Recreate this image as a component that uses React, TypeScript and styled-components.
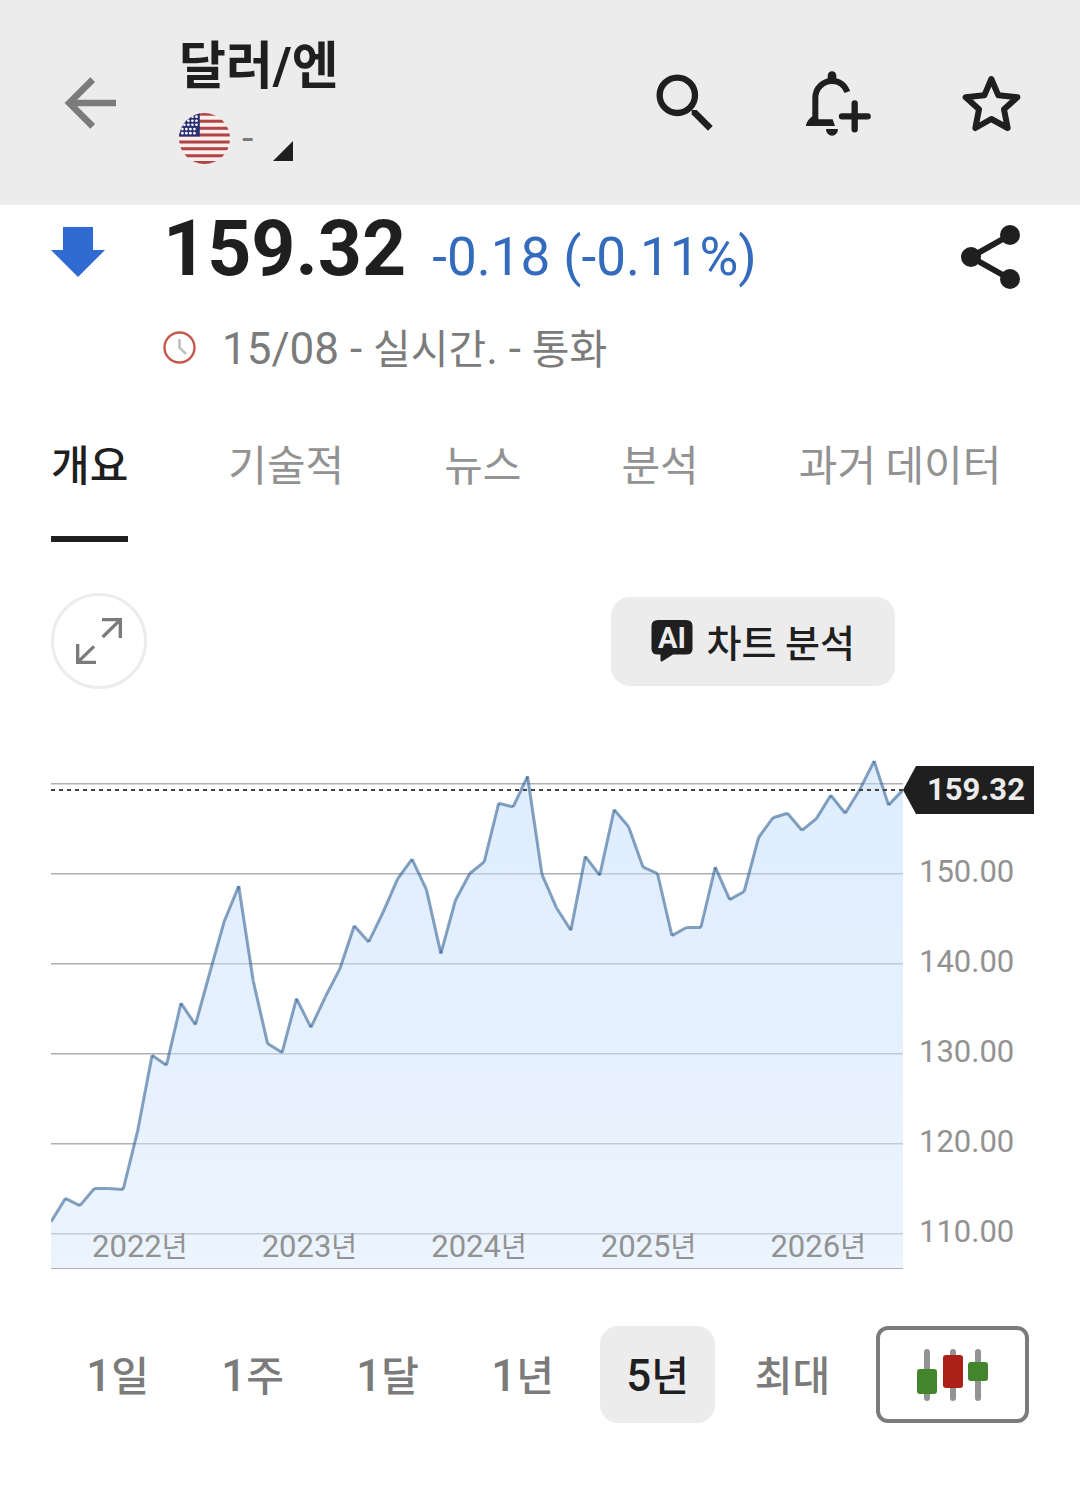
import React from 'react';
import styled, { createGlobalStyle } from 'styled-components';

const ink = '#1f1f1f';
const gray = '#7b7b7b';
const lightGray = '#929292';
const surface = '#ececec';
const blue = '#346bbd';

const GlobalStyle = createGlobalStyle`
  * { box-sizing: border-box; }
  body {
    margin: 0;
    background: #fff;
    color: ${ink};
    font-family: Roboto, "Noto Sans CJK KR", sans-serif;
  }
  h1, p, ul, ol { margin: 0; padding: 0; }
  ul, ol { list-style: none; }
  button {
    border: 0;
    padding: 0;
    background: none;
    color: inherit;
    font: inherit;
    cursor: pointer;
  }
  svg { display: block; }
`;

const Hangul = styled.span<{ $size: number }>`
  font-family: "Noto Sans CJK KR", sans-serif;
  font-size: ${(p) => p.$size}px;
`;

const Header = styled.header`
  display: flex;
  align-items: center;
  height: 205px;
  padding: 0 53px 0 64px;
  background: ${surface};
`;

const IconButton = styled.button`
  flex: none;
  display: block;
`;

const Heading = styled.div`
  flex: 1;
  display: flex;
  flex-direction: column;
  gap: 16px;
  padding: 0 0 4px 63px;
`;

const Title = styled.h1`
  font: 700 51px/60px Roboto, "Noto Sans CJK KR", sans-serif;
`;

const MarketButton = styled.button`
  display: flex;
  align-items: flex-end;
  align-self: flex-start;
  height: 51px;
`;

const MarketName = styled.span`
  width: 43px;
  padding-left: 12px;
  text-align: left;
  color: ${gray};
  font-size: 41px;
  line-height: 51px;
`;

const Corner = styled.span`
  width: 20px;
  height: 20px;
  margin-bottom: 3px;
  background: ${ink};
  clip-path: polygon(100% 0, 100% 100%, 0 100%);
`;

const Actions = styled.div`
  display: flex;
  gap: 81px;
`;

const Quote = styled.section`
  display: grid;
  grid-template-columns: 112px 1fr auto;
  padding: 0 59px 0 51px;
`;

const Arrow = styled.div`
  padding-top: 22px;
`;

const Prices = styled.div`
  display: flex;
  align-items: baseline;
  gap: 26px;
  line-height: 88px;
`;

const Price = styled.strong`
  font-size: 77px;
  font-weight: 700;
`;

const Change = styled.span`
  font-size: 53px;
  color: ${blue};
`;

const Share = styled(IconButton)`
  align-self: start;
  margin-top: 18px;
`;

const Meta = styled.p`
  grid-column: 2 / 4;
  display: flex;
  align-items: center;
  gap: 26px;
  margin-top: 15px;
  color: ${gray};
  font-size: 44px;
  line-height: 60px;
`;

const Tabs = styled.nav`
  display: flex;
  gap: 100px;
  padding: 52px 51px 0;
  overflow: hidden;
`;

const Tab = styled.a<{ $active?: boolean }>`
  flex: none;
  height: 111px;
  border-bottom: 6px solid ${(p) => (p.$active ? ink : 'transparent')};
  color: ${(p) => (p.$active ? ink : lightGray)};
  font: ${(p) => (p.$active ? 500 : 400)} 42px/64px "Noto Sans CJK KR", sans-serif;
  text-decoration: none;
`;

const Tools = styled.div`
  display: flex;
  align-items: center;
  justify-content: space-between;
  padding: 51px 185px 0 51px;
`;

const Expand = styled.button`
  display: grid;
  place-items: center;
  width: 96px;
  height: 96px;
  border: 3px solid ${surface};
  border-radius: 50%;
`;

const Analyze = styled.button`
  display: flex;
  align-items: center;
  gap: 14px;
  height: 89px;
  padding: 0 40px;
  border-radius: 19px;
  background: ${surface};
  font: 500 38px/56px "Noto Sans CJK KR", sans-serif;
`;

const ChartArea = styled.section`
  display: grid;
  grid-template-columns: 1fr 131px;
  align-items: start;
  padding: 66px 46px 0 51px;
`;

const Plot = styled.div`
  position: relative;
`;

const PlotSvg = styled.svg`
  width: 100%;
  height: 514px;
`;

const Years = styled.ol`
  position: absolute;
  inset: auto 0 0 0;
  display: flex;
  padding-left: 4px;
  color: ${lightGray};
  font-size: 31px;
  line-height: 44px;
  text-align: center;

  li { width: 20%; }
`;

const Axis = styled.div`
  padding-top: 11px;
`;

const PriceTag = styled.div`
  height: 48px;
  padding-left: 24px;
  background: ${ink};
  clip-path: polygon(13px 0, 100% 0, 100% 100%, 13px 100%, 0 50%);
  color: ${surface};
  font-size: 31px;
  font-weight: 700;
  line-height: 48px;
`;

const Ticks = styled.ol`
  padding: 13px 0 0 16px;
  color: ${lightGray};
  font-size: 31px;
  line-height: 90px;
`;

const Footer = styled.section`
  display: flex;
  gap: 26px;
  padding: 49px 51px 0 60px;
`;

const Ranges = styled.div`
  flex: 1;
  display: grid;
  grid-template-columns: repeat(6, 1fr);
  gap: 20px;
`;

const Range = styled.button<{ $active?: boolean }>`
  height: 97px;
  border-radius: 18px;
  background: ${(p) => (p.$active ? surface : 'transparent')};
  color: ${(p) => (p.$active ? ink : gray)};
  font-size: 44px;
  font-weight: 500;
  line-height: 60px;
  white-space: nowrap;
`;

const ChartType = styled.button`
  display: grid;
  place-items: center;
  width: 153px;
  height: 97px;
  border: 4px solid ${gray};
  border-radius: 12px;
`;

const history = [
  111.3, 113.9, 113.1, 115, 115, 114.9, 121.4, 129.8, 128.7, 135.6, 133.2, 139,
  144.7, 148.6, 138.1, 131.1, 130.1, 136.1, 132.9, 136.3, 139.4, 144.2, 142.4, 145.7,
  149.4, 151.6, 148.2, 141.1, 147, 150, 151.3, 157.8, 157.4, 160.8, 149.9, 146.2,
  143.7, 151.9, 149.8, 157.1, 155.2, 150.7, 150, 143.1, 144, 144, 150.7, 147.1,
  148, 154, 156.2, 156.7, 154.8, 156.1, 158.7, 156.7, 159.3, 162.5, 157.6, 159.3,
];

const W = 852;
const H = 514;
const yOf = (v: number) => 28.5 + (160 - v) * 9;
const points = history.map((v, i) => [(i * W) / (history.length - 1), yOf(v)]);
const areaPath = `M0 ${H} ${points.map(([x, y]) => `L${x} ${y}`).join(' ')} L${W} ${H}Z`;

const PriceChart = () => (
  <PlotSvg viewBox={`0 0 ${W} ${H}`} preserveAspectRatio="none" role="img" aria-label="달러/엔 5년">
    <defs>
      <linearGradient id="area" x1="0" y1="0" x2="0" y2="1">
        <stop offset="0" stopColor="#bedafc" />
        <stop offset="1" stopColor="#d9eafd" />
      </linearGradient>
    </defs>
    {[160, 150, 140, 130, 120, 110].map((v) => (
      <line key={v} x1="0" x2={W} y1={yOf(v) + 0.2} y2={yOf(v) + 0.2} stroke="#b0b0b0" strokeWidth="1.4" />
    ))}
    <path d={areaPath} fill="url(#area)" fillOpacity="0.5" />
    <g stroke="#285a8c" strokeOpacity="0.56" strokeWidth="3">
      {points.slice(1).map(([x, y], i) => (
        <line key={i} x1={points[i][0]} y1={points[i][1]} x2={x} y2={y} />
      ))}
    </g>
    <line x1="0" x2={W} y1="35" y2="35" stroke="#444" strokeWidth="2" strokeDasharray="4 4" />
    <line x1="0" x2={W} y1="513.5" y2="513.5" stroke="#b0b0b0" />
  </PlotSvg>
);

const BackIcon = () => (
  <svg width="52" height="52" viewBox="72 172 156 156" fill="none" stroke={gray} strokeWidth="20">
    <path d="M228 250H92M158 180L88 250L158 320" />
  </svg>
);

const FlagIcon = () => (
  <svg width="51" height="51" viewBox="418 279 152 152">
    <defs>
      <clipPath id="flag"><circle cx="494" cy="355" r="76" /></clipPath>
    </defs>
    <g clipPath="url(#flag)">
      <rect x="418" y="279" width="152" height="152" fill="#fdeeee" />
      {[283, 304, 325, 345, 366, 386, 407, 427].map((y) => (
        <rect key={y} x="418" y={y - 5} width="152" height="9" fill="#ad4545" />
      ))}
      <rect x="418" y="279" width="62" height="70" fill="#2b2f73" />
      {[[458, 290], [470, 290], [446, 302], [458, 302], [470, 302], [434, 314], [446, 314], [458, 314], [470, 314], [428, 327], [440, 327], [452, 327], [464, 327], [428, 339], [440, 339], [452, 339], [464, 339]].map(([x, y]) => (
        <circle key={`${x}-${y}`} cx={x} cy={y} r="4" fill="#fff" />
      ))}
    </g>
  </svg>
);

const SearchIcon = () => (
  <svg width="72" height="72" viewBox="57 51 216 216" fill="none" stroke={ink}>
    <circle cx="142" cy="136" r="53" strokeWidth="19" />
    <path d="M185 180H200L248 228L234 242L185 193Z" fill={ink} stroke="none" />
  </svg>
);

const BellPlusIcon = () => (
  <svg width="72" height="72" viewBox="516 51 216 216" fill="none" stroke={ink}>
    <path d="M556 214V143A50 50 0 0 1 606 93C628 93 644 106 652 126" strokeWidth="18" />
    <path d="M593 92V77A13 13 0 0 1 619 77V92Z" fill={ink} stroke="none" />
    <path d="M528 228C529 215 537 207 548 198L565 208H608L615 228Z" fill={ink} stroke="none" />
    <path d="M588 237H624A18 20 0 0 1 588 237Z" fill={ink} stroke="none" />
    <path d="M636 199H713M674 160V238" strokeWidth="19" strokeLinecap="round" />
  </svg>
);

const StarIcon = () => (
  <svg width="72" height="72" viewBox="975 51 216 216" fill="none" stroke={ink}>
    <path d="M1084 87L1105 136L1162 142L1122 178L1133 234L1084 207L1036 234L1047 178L1007 142L1063 136Z" strokeWidth="18" strokeLinejoin="round" />
  </svg>
);

const DownIcon = () => (
  <svg width="54" height="50" viewBox="0 0 54 50" fill="#2f6bd3">
    <path d="M12 0H42V23H54L27 50L0 23H12Z" />
  </svg>
);

const ShareIcon = () => (
  <svg width="60" height="68" viewBox="0 0 60 68" fill={ink}>
    <path d="M49 12L10 34L49 56" fill="none" stroke={ink} strokeWidth="6" />
    <circle cx="49" cy="12" r="10" />
    <circle cx="10" cy="34" r="10" />
    <circle cx="49" cy="56" r="10" />
  </svg>
);

const ClockIcon = () => (
  <svg width="33" height="33" viewBox="0 0 33 33" fill="none">
    <circle cx="16.5" cy="16.5" r="15" stroke="#c4594c" strokeWidth="2.4" />
    <path d="M16.500 8V16.500L23 23" stroke="#bababa" strokeWidth="2.4" />
  </svg>
);

const ExpandIcon = () => (
  <svg width="46" height="46" viewBox="0 0 138 138" fill="none" stroke={gray} strokeWidth="10">
    <path d="M78 5H133V60M131 7L80 57M5 78V133H60M7 131L54 85" />
  </svg>
);

const AiIcon = () => (
  <svg width="42" height="42" viewBox="0 0 42 42">
    <path d="M7 0H35Q41.500 0 41.500 6V29Q41.500 34.500 35 34.500H22L11 41.500Q9.500 42 9.500 40V34.500H7Q0.500 34.500 0.500 29V6Q0.500 0 7 0Z" fill={ink} />
    <text x="21" y="27.500" textAnchor="middle" fill={surface} fontFamily="Roboto, sans-serif" fontSize="29" fontWeight="700">AI</text>
  </svg>
);

const CandlesIcon = () => (
  <svg width="72" height="52" viewBox="0 0 72 52">
    <g stroke="#939393" strokeWidth="6" strokeLinecap="round">
      <path d="M10 3V49M36 3V49M61 3V49" />
    </g>
    <rect x="0" y="20" width="20" height="25" rx="3" fill="#43852c" />
    <rect x="26" y="6" width="20" height="33" rx="3" fill="#ab2118" />
    <rect x="51" y="13" width="20" height="19" rx="3" fill="#43852c" />
  </svg>
);

const tabs = ['개요', '기술적', '뉴스', '분석', '과거 데이터'];
const ranges = [['1', '일'], ['1', '주'], ['1', '달'], ['1', '년'], ['5', '년'], ['', '최대']];
const years = ['2022', '2023', '2024', '2025', '2026'];
const ticks = ['150.00', '140.00', '130.00', '120.00', '110.00'];

export default function App() {
  return (
    <>
      <GlobalStyle />
      <Header>
        <IconButton aria-label="뒤로"><BackIcon /></IconButton>
        <Heading>
          <Title>달러/엔</Title>
          <MarketButton aria-label="시장 선택">
            <FlagIcon />
            <MarketName>-</MarketName>
            <Corner />
          </MarketButton>
        </Heading>
        <Actions>
          <IconButton aria-label="검색"><SearchIcon /></IconButton>
          <IconButton aria-label="알림 추가"><BellPlusIcon /></IconButton>
          <IconButton aria-label="즐겨찾기"><StarIcon /></IconButton>
        </Actions>
      </Header>
      <main>
        <Quote>
          <Arrow><DownIcon /></Arrow>
          <Prices>
            <Price>159.32</Price>
            <Change>-0.18 (-0.11%)</Change>
          </Prices>
          <Share aria-label="공유"><ShareIcon /></Share>
          <Meta>
            <ClockIcon />
            <span>
              15/08 - <Hangul $size={41}>실시간</Hangul>. - <Hangul $size={41}>통화</Hangul>
            </span>
          </Meta>
        </Quote>
        <Tabs>
          {tabs.map((label, i) => (
            <Tab key={label} href="#" $active={i === 0}>{label}</Tab>
          ))}
        </Tabs>
        <Tools>
          <Expand aria-label="전체 화면"><ExpandIcon /></Expand>
          <Analyze><AiIcon />차트 분석</Analyze>
        </Tools>
        <ChartArea>
          <Plot>
            <PriceChart />
            <Years>
              {years.map((y) => (
                <li key={y}>{y}<Hangul $size={28}>년</Hangul></li>
              ))}
            </Years>
          </Plot>
          <Axis>
            <PriceTag>159.32</PriceTag>
            <Ticks>
              {ticks.map((t) => <li key={t}>{t}</li>)}
            </Ticks>
          </Axis>
        </ChartArea>
        <Footer>
          <Ranges>
            {ranges.map(([n, unit]) => (
              <Range key={n + unit} $active={n === '5'} aria-pressed={n === '5'}>
                {n}<Hangul $size={41}>{unit}</Hangul>
              </Range>
            ))}
          </Ranges>
          <ChartType aria-label="캔들 차트"><CandlesIcon /></ChartType>
        </Footer>
      </main>
    </>
  );
}
